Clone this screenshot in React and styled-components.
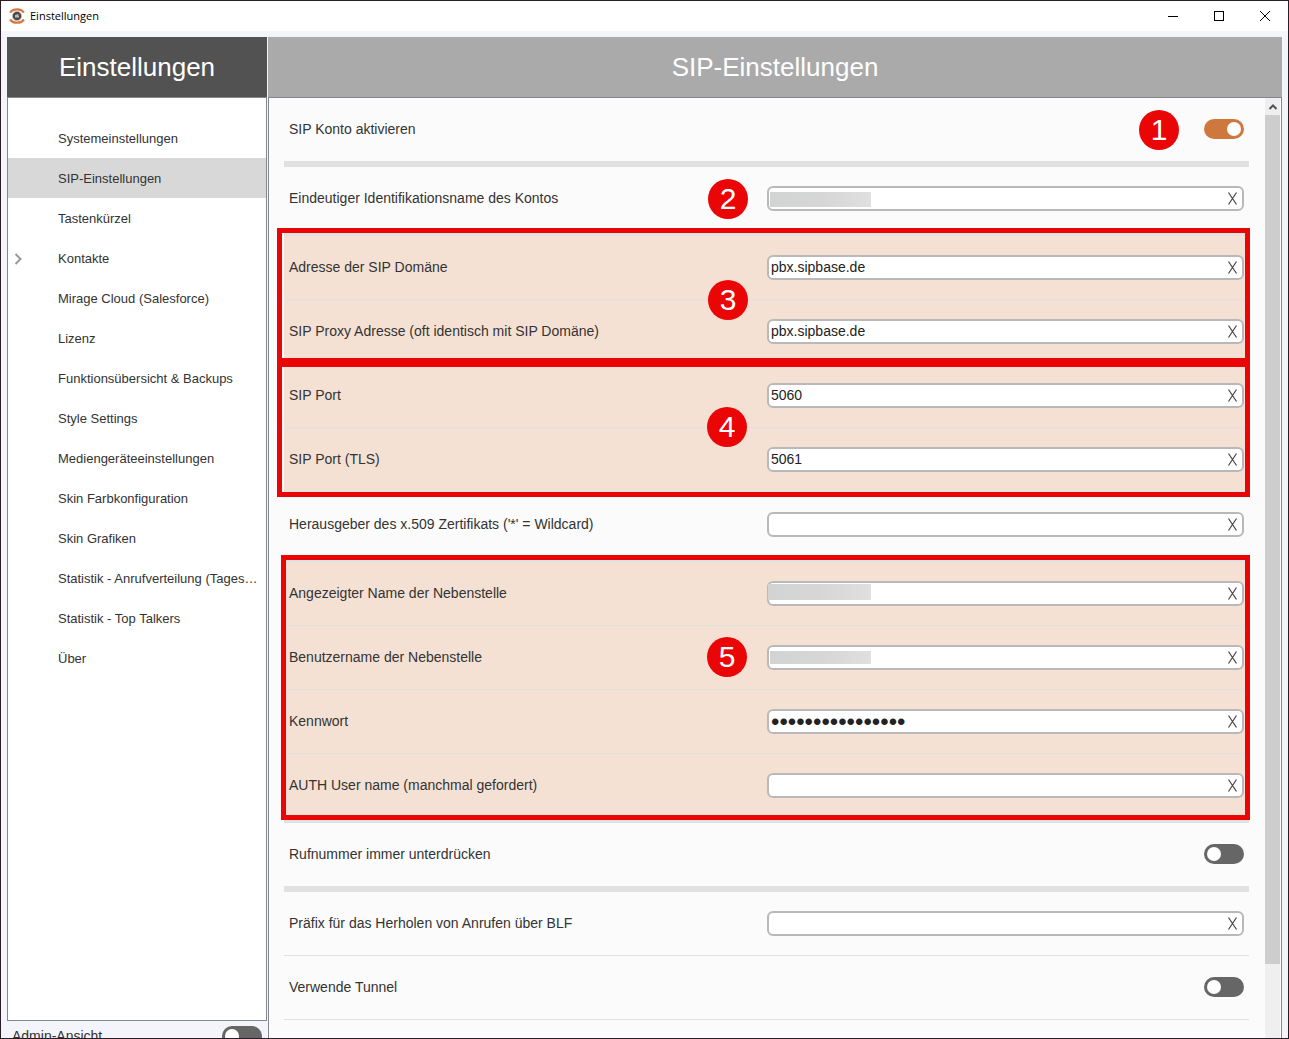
import React, { useState } from "react";
import styled, { createGlobalStyle, css } from "styled-components";

const GlobalStyle = createGlobalStyle`
  *, *::before, *::after { box-sizing: border-box; }
  body { margin: 0; }
  body, input, button { font-family: "Liberation Sans", Arial, sans-serif; }
`;

const LINE = "#828790";
const RED = "#ea0606";
const DIVIDER = "#e1e1e1";

const Window = styled.div`
  height: 100vh;
  display: flex;
  flex-direction: column;
  overflow: hidden;
  border: 1px solid #2b1d28;
  background: #f4f5fa;
  color: #333;
`;

const TitleBar = styled.header`
  height: 30px;
  flex: none;
  display: flex;
  align-items: center;
  padding-left: 8px;
  background: #fff;
  color: #000;
  font: 11px/16px "Open Sans", "Noto Sans", sans-serif;
`;

const TitleText = styled.span`
  flex: 1;
  padding-left: 5px;
`;

const WindowButton = styled.button`
  width: 46px;
  height: 28px;
  padding: 0;
  border: 0;
  background: none;
  display: grid;
  place-items: center;
`;

const Panels = styled.div`
  flex: 1;
  min-height: 0;
  display: grid;
  grid-template-columns: 260px minmax(0, 1fr);
  column-gap: 1px;
  padding: 6px 6px 0;
`;

const Column = styled.div`
  min-height: 0;
  display: flex;
  flex-direction: column;
`;

const PanelTitle = styled.h1`
  margin: 0;
  height: 60px;
  flex: none;
  font-size: 26px;
  font-weight: 400;
  line-height: 60px;
  text-align: center;
  color: #fff;
  background: ${(p) => (p.$dark ? "#525252" : "#aaaaaa")};
`;

const Nav = styled.nav`
  flex: 1;
  min-height: 0;
  padding-top: 20px;
  border: 1px solid ${LINE};
  background: #fff;
`;

const NavItem = styled.a`
  display: flex;
  align-items: center;
  height: 40px;
  padding: 2px 8px 0 0;
  font-size: 13px;
  line-height: 16px;
  color: #333;
  text-decoration: none;
  background: ${(p) => (p.$active ? "#d8d8d8" : "transparent")};
`;

const NavMarker = styled.span`
  width: 50px;
  flex: none;
  padding-left: 6px;
  display: flex;
`;

const NavText = styled.span`
  white-space: nowrap;
`;

const AdminBar = styled.div`
  height: 17px;
  flex: none;
  overflow: hidden;
  display: flex;
  align-items: flex-start;
  justify-content: space-between;
  padding: 5px 5px 0;
  font-size: 14px;
  line-height: 20px;
`;

const Content = styled.div`
  flex: 1;
  min-height: 0;
  display: flex;
  border: 1px solid ${LINE};
  border-bottom: 0;
  background: #fbfbfb;
`;

const Settings = styled.form`
  flex: 1;
  min-width: 0;
  overflow: hidden;
  padding: 0 16px 0 15px;
`;

const ScrollTrack = styled.div`
  width: 16px;
  flex: none;
  display: grid;
  grid-template-rows: 17px 92fr 8fr;
  border-right: 1px solid #fff;
  background: #efefef;
`;

const ScrollButton = styled.button`
  padding: 0;
  border: 0;
  background: #efefef;
  display: grid;
  place-items: center;
`;

const ScrollThumb = styled.div`
  background: #cdcdcd;
`;

const Divider = styled.div`
  height: ${(p) => p.$size || 1}px;
  background: ${DIVIDER};
`;

const Group = styled.section`
  position: relative;
  background: #f5e1d4;
`;

const Frame = styled.div`
  position: absolute;
  z-index: 1;
  inset: ${(p) => p.$inset};
  border: 5px solid ${RED};
  pointer-events: none;
`;

const Row = styled.div`
  height: 63px;
  display: grid;
  grid-template-columns: 1fr 1fr;
  column-gap: 1px;
  padding: 0 5px;
`;

const Cell = styled.div`
  min-width: 0;
  display: flex;
  align-items: center;
`;

const LabelCell = styled(Cell)`
  position: relative;
  padding-bottom: 1px;
`;

const SwitchCell = styled(LabelCell)`
  justify-content: flex-end;
`;

const Label = styled.label`
  font-size: 14px;
  line-height: 16px;
  white-space: nowrap;
`;

const Badge = styled.span`
  position: absolute;
  z-index: 2;
  top: ${(p) => p.$top || 12}px;
  right: ${(p) => p.$right || 18}px;
  width: 40px;
  height: 40px;
  border-radius: 50%;
  background: ${RED};
  color: #fff;
  font-size: 30px;
  line-height: 40px;
  text-align: center;
`;

const Field = styled.div`
  position: relative;
  flex: 1;
  height: 25px;
  display: flex;
  border: 2px solid #b9b9b9;
  border-radius: 6px;
  background: #fff;
`;

const Input = styled.input`
  flex: 1;
  min-width: 0;
  padding: 0 2px 2px;
  border: 0;
  outline: 0;
  background: none;
  color: #222;
  font-size: 14px;
  ${(p) =>
    p.type === "password" &&
    css`
      padding-bottom: 0;
      font-size: 24px;
      line-height: 20px;
    `}
`;

const ClearButton = styled.button`
  width: 19px;
  padding: 0;
  border: 0;
  background: none;
  display: grid;
  place-items: center;
`;

const Redaction = styled.span`
  position: absolute;
  top: ${(p) => p.$top}px;
  left: ${(p) => p.$left}px;
  width: ${(p) => 102 - p.$left}px;
  height: ${(p) => p.$height}px;
  background: linear-gradient(90deg, #d2d4d4, #d6d6d6 50%, #dfdfdf);
`;

const Switch = styled.input`
  appearance: none;
  margin: 0;
  width: 40px;
  height: 20px;
  flex: none;
  display: flex;
  align-items: center;
  padding: 0 3px;
  border-radius: 10px;
  background: #666;

  &::before {
    content: "";
    width: 14px;
    height: 14px;
    border-radius: 50%;
    background: #fff;
  }

  &:checked {
    background: #cf783d;
    justify-content: flex-end;
  }
`;

const NAV = [
  "Systemeinstellungen",
  "SIP-Einstellungen",
  "Tastenkürzel",
  "Kontakte",
  "Mirage Cloud (Salesforce)",
  "Lizenz",
  "Funktionsübersicht & Backups",
  "Style Settings",
  "Mediengeräteeinstellungen",
  "Skin Farbkonfiguration",
  "Skin Grafiken",
  "Statistik - Anrufverteilung (Tages…",
  "Statistik - Top Talkers",
  "Über",
];

function AppLogo() {
  return (
    <svg width="16" height="16" viewBox="0 0 16 16" fill="none" aria-hidden="true">
      <path d="M1.2 4.6C3.6 0.2 12.4 0.2 14.8 4.6" stroke="#d9793f" strokeWidth="2.2" />
      <path d="M1.2 11.4C3.6 15.8 12.4 15.8 14.8 11.4" stroke="#d9793f" strokeWidth="2.2" />
      <circle cx="8" cy="8" r="4.6" fill="#4a4a4a" stroke="#bbb" strokeWidth="0.8" />
      <path d="M6 9.5V7h1.500v-.8h2V8H10v1.500z" fill="#bbb" />
    </svg>
  );
}

function TextRow({ id, label, value = "", type = "text", redacted, badge, badgeTop, badgeRight }) {
  const [text, setText] = useState(value);
  return (
    <Row>
      <LabelCell>
        <Label htmlFor={id}>{label}</Label>
        {badge && (
          <Badge $top={badgeTop} $right={badgeRight}>
            {badge}
          </Badge>
        )}
      </LabelCell>
      <Cell>
        <Field>
          <Input id={id} type={type} value={text} onChange={(e) => setText(e.target.value)} />
          {redacted && <Redaction $left={redacted.left} $top={redacted.top} $height={redacted.height} />}
          <ClearButton type="button" aria-label="Leeren" onClick={() => setText("")}>
            <svg width="11" height="13" viewBox="0 0 11 13" fill="none" stroke="#444" aria-hidden="true">
              <path d="M1.500 0.5L9.500 12.5M9.500 0.5L1.500 12.5" strokeWidth="1.2" />
            </svg>
          </ClearButton>
        </Field>
      </Cell>
    </Row>
  );
}

function SwitchRow({ id, label, on, badge }) {
  return (
    <Row>
      <LabelCell>
        <Label htmlFor={id}>{label}</Label>
      </LabelCell>
      <SwitchCell>
        {badge && <Badge $right={65}>{badge}</Badge>}
        <Switch id={id} type="checkbox" defaultChecked={on} />
      </SwitchCell>
    </Row>
  );
}

export default function App() {
  return (
    <Window>
      <GlobalStyle />
      <TitleBar>
        <AppLogo />
        <TitleText>Einstellungen</TitleText>
        <WindowButton aria-label="Minimieren">
          <svg width="10" height="10" stroke="#000" aria-hidden="true">
            <path d="M0 5.5H10" />
          </svg>
        </WindowButton>
        <WindowButton aria-label="Maximieren">
          <svg width="10" height="10" fill="none" stroke="#000" aria-hidden="true">
            <rect x="0.5" y="0.5" width="9" height="9" />
          </svg>
        </WindowButton>
        <WindowButton aria-label="Schließen">
          <svg width="10" height="10" stroke="#000" aria-hidden="true">
            <path d="M0 0L10 10M10 0L0 10" />
          </svg>
        </WindowButton>
      </TitleBar>
      <Panels>
        <Column>
          <PanelTitle $dark>Einstellungen</PanelTitle>
          <Nav>
            {NAV.map((name, i) => (
              <NavItem key={name} href="#" $active={i === 1}>
                <NavMarker>
                  {name === "Kontakte" && (
                    <svg width="8" height="12" fill="none" stroke="#999" strokeWidth="2" aria-hidden="true">
                      <path d="M1.5 1L6.5 6L1.5 11" />
                    </svg>
                  )}
                </NavMarker>
                <NavText>{name}</NavText>
              </NavItem>
            ))}
          </Nav>
          <AdminBar>
            <label htmlFor="admin">Admin-Ansicht</label>
            <Switch id="admin" type="checkbox" />
          </AdminBar>
        </Column>
        <Column as="main">
          <PanelTitle as="h2">SIP-Einstellungen</PanelTitle>
          <Content>
            <Settings>
              <SwitchRow id="active" label="SIP Konto aktivieren" on badge="1" />
              <Divider $size={6} />
              <TextRow
                id="account"
                label="Eindeutiger Identifikationsname des Kontos"
                redacted={{ left: 1, top: 4, height: 15 }}
                badge="2"
              />
              <Divider $size={6} />
              <Group>
                <TextRow id="domain" label="Adresse der SIP Domäne" value="pbx.sipbase.de" badge="3" badgeTop={44} />
                <Divider />
                <TextRow id="proxy" label="SIP Proxy Adresse (oft identisch mit SIP Domäne)" value="pbx.sipbase.de" />
                <Frame $inset="-8px -1px 0 -7px" />
              </Group>
              <Divider />
              <Group>
                <TextRow id="port" label="SIP Port" value="5060" badge="4" badgeTop={43} badgeRight={19} />
                <Divider />
                <TextRow id="tls" label="SIP Port (TLS)" value="5061" />
                <Frame $inset="-2px -1px -6px -7px" />
              </Group>
              <Divider $size={2} />
              <TextRow id="issuer" label="Herausgeber des x.509 Zertifikats ('*' = Wildcard)" />
              <Divider $size={6} />
              <Group>
                <TextRow
                  id="display"
                  label="Angezeigter Name der Nebenstelle"
                  redacted={{ left: -1, top: 1, height: 16 }}
                />
                <Divider />
                <TextRow
                  id="user"
                  label="Benutzername der Nebenstelle"
                  redacted={{ left: 1, top: 4, height: 13 }}
                  badge="5"
                  badgeTop={11}
                  badgeRight={19}
                />
                <Divider />
                <TextRow id="password" label="Kennwort" type="password" value="0123456789abcdef" />
                <Divider />
                <TextRow id="auth" label="AUTH User name (manchmal gefordert)" />
                <Frame $inset="-7px -1px -3px -3px" />
              </Group>
              <Divider $size={6} />
              <SwitchRow id="hide" label="Rufnummer immer unterdrücken" />
              <Divider $size={6} />
              <TextRow id="prefix" label="Präfix für das Herholen von Anrufen über BLF" />
              <Divider />
              <SwitchRow id="tunnel" label="Verwende Tunnel" />
              <Divider />
            </Settings>
            <ScrollTrack>
              <ScrollButton type="button" aria-label="Nach oben">
                <svg width="8" height="6" fill="none" stroke="#555" strokeWidth="2" aria-hidden="true">
                  <path d="M0.5 5L4 1.5L7.5 5" />
                </svg>
              </ScrollButton>
              <ScrollThumb />
            </ScrollTrack>
          </Content>
        </Column>
      </Panels>
    </Window>
  );
}
